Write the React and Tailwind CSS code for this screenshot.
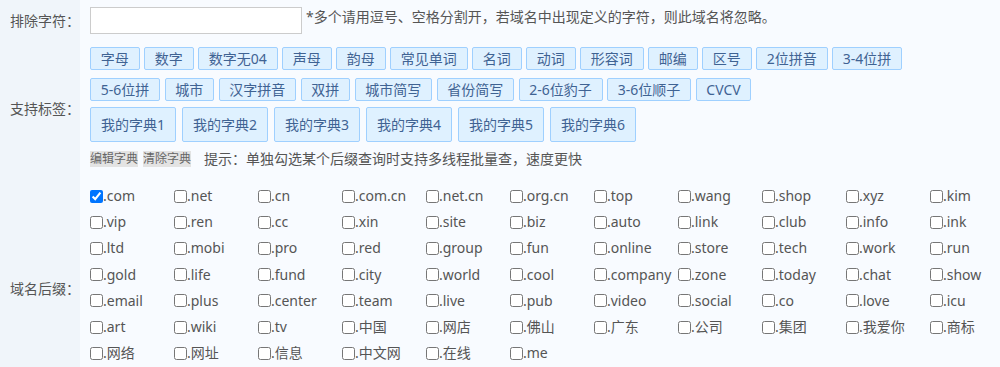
import React from "react";

const tags = ["字母","数字","数字无04","声母","韵母","常见单词","名词","动词","形容词","邮编","区号","2位拼音","3-4位拼","5-6位拼","城市","汉字拼音","双拼","城市简写","省份简写","2-6位豹子","3-6位顺子","CVCV"];
const dicts = ["我的字典1","我的字典2","我的字典3","我的字典4","我的字典5","我的字典6"];
const domains = [".com",".net",".cn",".com.cn",".net.cn",".org.cn",".top",".wang",".shop",".xyz",".kim",
".vip",".ren",".cc",".xin",".site",".biz",".auto",".link",".club",".info",".ink",
".ltd",".mobi",".pro",".red",".group",".fun",".online",".store",".tech",".work",".run",
".gold",".life",".fund",".city",".world",".cool",".company",".zone",".today",".chat",".show",
".email",".plus",".center",".team",".live",".pub",".video",".social",".co",".love",".icu",
".art",".wiki",".tv",".中国",".网店",".佛山",".广东",".公司",".集团",".我爱你",".商标",
".网络",".网址",".信息",".中文网",".在线",".me"];

function Label({ children }) {
  return (
    <div className="w-[80px] shrink-0 bg-[#f0f5fa] flex items-center justify-end text-[14px] text-[#555]">
      <span className="w-[70px]">{children}</span>
    </div>
  );
}

export default function App() {
  return (
    <div className="w-[1000px] h-[367px] overflow-hidden bg-[#f8fbff] text-[#555]" style={{ fontFamily: '"Noto Sans", "Noto Sans CJK SC", sans-serif' }}>
      <div className="flex h-[40px]">
        <Label>排除字符：</Label>
        <div className="flex items-center pl-[10px] pt-[1px]">
          <input className="w-[212px] h-[27px] bg-white border border-[#ccc] outline-none" />
          <span className="ml-[4px] text-[14px] leading-[20px] -mt-[8px]">*多个请用逗号、空格分割开，若域名中出现定义的字符，则此域名将忽略。</span>
        </div>
      </div>
      <div className="flex h-[136px]">
        <Label>支持标签：</Label>
        <div className="pl-[10px] pt-[7px]">
          <div className="flex flex-wrap gap-x-[4.5px] gap-y-[8px] w-[880px]">
            {tags.map((t) => (
              <span key={t} className="h-[23px] px-[9.75px] border border-[#9fd0ff] bg-[#dff1ff] text-[#3f6393] text-[14px] leading-[21px] rounded-[2px]">{t}</span>
            ))}
          </div>
          <div className="flex gap-[6px] mt-[6px]">
            {dicts.map((t) => (
              <span key={t} className="h-[35px] px-[10px] border border-[#9fd0ff] bg-[#dff1ff] text-[#3f6393] text-[14px] leading-[33px] rounded-[2px]">{t}</span>
            ))}
          </div>
          <div className="flex items-center mt-[9px] h-[16px]">
            <span className="bg-[#e3e3e3] text-[#666] text-[12px] leading-[16px]">编辑字典</span>
            <span className="ml-[5px] bg-[#e3e3e3] text-[#666] text-[12px] leading-[16px]">清除字典</span>
            <span className="ml-[13px] text-[14px] leading-[16px] text-[#555]">提示：单独勾选某个后缀查询时支持多线程批量查，速度更快</span>
          </div>
        </div>
      </div>
      <div className="flex h-[224px]">
        <Label>域名后缀：</Label>
        <div className="pl-[10px] pt-[7px]">
          <div className="grid grid-cols-[repeat(10,84px)_70px]">
            {domains.map((d, i) => (
              <label key={d} className="h-[26.2px] flex items-center text-[14px] text-[#555] whitespace-nowrap">
                <input type="checkbox" defaultChecked={i === 0} className="m-0 w-[13px] h-[13px] shrink-0" />
                <span className="leading-[18px]">{d}</span>
              </label>
            ))}
          </div>
        </div>
      </div>
    </div>
  );
}
